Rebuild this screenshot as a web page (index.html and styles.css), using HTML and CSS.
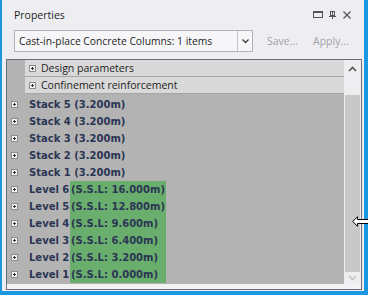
FILE: index.html
```html
<!DOCTYPE html>
<html lang="en">
<head>
    <meta charset="UTF-8">
    <title>Properties</title>
    <link rel="stylesheet" href="styles.css">
</head>
<body>
    <div class="panel">
        <div class="titlebar">
            <span class="title">Properties</span>
            <div class="win-btns">
                <svg width="10" height="7" viewBox="0 0 10 7"><rect x="0.5" y="0.5" width="9" height="6" fill="none" stroke="#555"/><line x1="0" y1="1.5" x2="10" y2="1.5" stroke="#555"/></svg>
                <svg width="7" height="8" viewBox="0 0 7 8"><rect x="1.5" y="0.5" width="4" height="4" fill="none" stroke="#555"/><line x1="3.5" y1="1" x2="3.5" y2="4" stroke="#555"/><line x1="0" y1="5.5" x2="7" y2="5.5" stroke="#555"/><line x1="3.5" y1="5" x2="3.5" y2="8" stroke="#555"/></svg>
                <svg width="8" height="8" viewBox="0 0 8 8"><path d="M0.5 0.5 L7.5 7.5 M7.5 0.5 L0.5 7.5" stroke="#555" stroke-width="1.3"/></svg>
            </div>
        </div>

        <div class="toolbar">
            <div class="combo">
                <span class="combo-text">Cast-in-place Concrete Columns: 1 items</span>
                <span class="combo-btn">
                    <svg width="7" height="5" viewBox="0 0 7 5"><path d="M0.5 0.5 L3.5 3.5 L6.5 0.5" fill="none" stroke="#444" stroke-width="1.4"/></svg>
                </span>
            </div>
            <span class="tb-link">Save...</span>
            <span class="tb-link">Apply...</span>
        </div>

        <div class="grid">
            <div class="grid-main">
                <div class="grid-body">
                    <div class="cat-row"><span class="plus"></span>Design parameters</div>
                    <div class="cat-row"><span class="plus"></span>Confinement reinforcement</div>
                    <div class="tree">
                        <div class="node"><span class="plus"></span>Stack 5 (3.200m)</div>
                        <div class="node"><span class="plus"></span>Stack 4 (3.200m)</div>
                        <div class="node"><span class="plus"></span>Stack 3 (3.200m)</div>
                        <div class="node"><span class="plus"></span>Stack 2 (3.200m)</div>
                        <div class="node"><span class="plus"></span>Stack 1 (3.200m)</div>
                        <div class="node"><span class="plus"></span><span class="lvl">Level 6</span><span class="ssl">(S.S.L: 16.000m)</span></div>
                        <div class="node"><span class="plus"></span><span class="lvl">Level 5</span><span class="ssl">(S.S.L: 12.800m)</span></div>
                        <div class="node"><span class="plus"></span><span class="lvl">Level 4</span><span class="ssl">(S.S.L: 9.600m)</span></div>
                        <div class="node"><span class="plus"></span><span class="lvl">Level 3</span><span class="ssl">(S.S.L: 6.400m)</span></div>
                        <div class="node"><span class="plus"></span><span class="lvl">Level 2</span><span class="ssl">(S.S.L: 3.200m)</span></div>
                        <div class="node"><span class="plus"></span><span class="lvl">Level 1</span><span class="ssl">(S.S.L: 0.000m)</span></div>
                    </div>
                </div>
                <div class="scrollbar">
                    <div class="sb-btn">
                        <svg width="9" height="6" viewBox="0 0 9 6"><path d="M1 5 L4.5 1.5 L8 5" fill="none" stroke="#555" stroke-width="1.6"/></svg>
                    </div>
                    <div class="sb-track"><div class="sb-thumb"></div></div>
                    <div class="sb-btn sb-down">
                        <svg width="9" height="6" viewBox="0 0 9 6"><path d="M1 1 L4.5 4.5 L8 1" fill="none" stroke="#c4c4c4" stroke-width="1.6"/></svg>
                    </div>
                </div>
            </div>
            <div class="grid-foot"></div>
        </div>

        <svg class="cursor" width="17" height="12" viewBox="0 0 17 12"><path d="M0.7 5.5 L5.5 0.7 L5.5 3.5 L17 3.5 L17 7.5 L5.5 7.5 L5.5 10.3 Z" fill="#fff" stroke="#000"/></svg>
    </div>
</body>
</html>
```

FILE: styles.css
```css
body {
    margin: 0;
    background: #1b98e0;
}

.panel {
    position: relative;
    width: 362px;
    height: 291px;
    margin-left: 2px;
    background: #eeeef2;
    font-family: "Open Sans", "Liberation Sans", sans-serif;
    color: #1e1e1e;
}

.titlebar {
    height: 29px;
    display: flex;
    align-items: center;
    padding-left: 12px;
    padding-right: 13px;
}

.title {
    font-size: 10.5px;
    flex: 1;
}

.win-btns {
    display: flex;
    align-items: center;
    gap: 6px;
}

.win-btns svg:last-child {
    margin-left: 1px;
}

.toolbar {
    display: flex;
    align-items: center;
    padding-left: 12px;
    height: 22px;
    margin-top: 1px;
}

.combo {
    width: 237px;
    height: 20px;
    border: 1px solid #b4b4b8;
    background: #f6f6f8;
    display: flex;
    align-items: center;
}

.combo-text {
    flex: 1;
    font-size: 10.3px;
    padding-left: 4px;
    white-space: nowrap;
    overflow: hidden;
}

.combo-btn {
    width: 14px;
    height: 20px;
    border-left: 1px solid #c4c4c8;
    display: flex;
    align-items: center;
    justify-content: center;
}

.tb-link {
    font-size: 10.5px;
    color: #a2a2a6;
    margin-left: 14px;
}

.tb-link + .tb-link {
    margin-left: 15px;
}

.grid {
    margin-top: 7px;
    margin-left: 4px;
    width: 354px;
    height: 229px;
    border: 1px solid #6e6e72;
    display: flex;
    flex-direction: column;
}

.grid-main {
    display: flex;
    height: 224px;
}

.grid-body {
    flex: 1;
    background: #b3b3b3;
    display: flex;
    flex-direction: column;
}

.cat-row {
    height: 16px;
    margin-left: 18px;
    background: #d9d9d9;
    border-bottom: 1px solid #a6a6a6;
    display: flex;
    align-items: center;
    padding-left: 4px;
    font-size: 10.5px;
}

.cat-row .plus {
    margin-right: 5px;
}

.plus {
    width: 5px;
    height: 5px;
    border: 1px solid #8c8c8c;
    background: #f4f4f4 linear-gradient(#333, #333) center / 3px 1px no-repeat;
    position: relative;
    flex: none;
}

.plus::after {
    content: "";
    position: absolute;
    left: 2px;
    top: 1px;
    width: 1px;
    height: 3px;
    background: #333;
}

.tree {
    flex: 1;
    padding-top: 2px;
}

.node {
    height: 17px;
    display: flex;
    align-items: center;
    padding-left: 4px;
    font-family: "DejaVu Sans", sans-serif;
    font-weight: bold;
    font-size: 10px;
    color: #2b3554;
    white-space: nowrap;
}

.node .plus {
    margin-right: 11px;
}

.lvl {
    width: 41px;
}

.ssl {
    width: 95px;
    height: 17px;
    line-height: 17px;
    padding-left: 1px;
    background: #6aae6d;
}

.scrollbar {
    width: 17px;
    background: #eeeef0;
    display: flex;
    flex-direction: column;
}

.sb-btn {
    height: 18px;
    display: flex;
    align-items: center;
    justify-content: center;
}

.sb-track {
    flex: 1;
    padding-top: 17px;
}

.sb-thumb {
    height: 100%;
    margin: 0 1px;
    background: #c8c8c8;
}

.sb-down {
    height: 12px;
}

.grid-foot {
    height: 5px;
    background: #f2f2f5;
}

.cursor {
    position: absolute;
    left: 350px;
    top: 216px;
}
```
